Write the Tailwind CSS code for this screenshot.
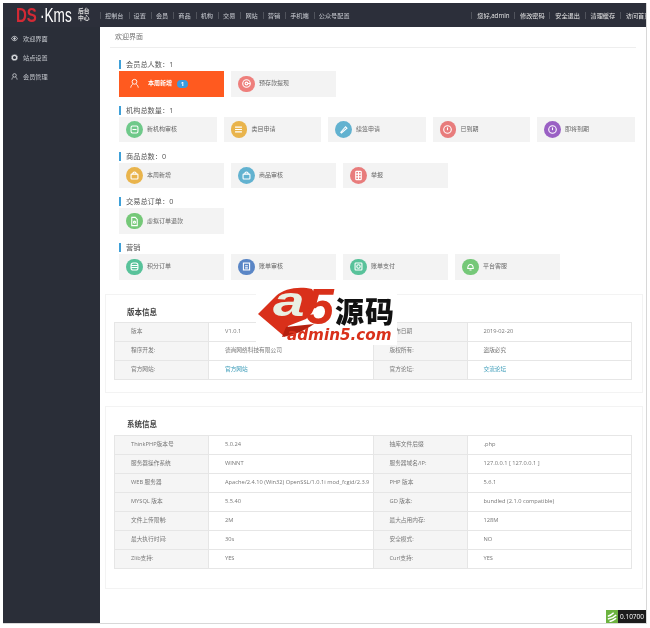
<!DOCTYPE html>
<html lang="zh-CN">
<head>
  <meta charset="UTF-8">
  <title>DS-Kms 后台中心</title>
  <script src="https://cdn.jsdelivr.net/npm/@tailwindcss/browser@4"></script>
</head>
<body class="bg-white font-['Open_Sans','Noto_Sans_CJK_SC',sans-serif] text-[#666] overflow-hidden">
<div class="relative w-[650px] h-[628px] overflow-hidden pt-[3px] pl-[3px] pr-[3px] pb-[4px] [filter:blur(0.35px)]">
  <div class="relative flex flex-col w-[644px] h-[621px] overflow-hidden border-r border-b border-[#d8d8d8]">

    <!-- top bar -->
    <header class="flex items-center h-[24px] shrink-0 bg-[#2c2f3a] text-[#c9ccd2] text-[6.2px] whitespace-nowrap">
      <div class="flex items-center w-[97px] shrink-0 pl-[13px]">
        <span class="inline-block w-[24px] origin-left scale-x-75 text-[#d22a35] text-[20px] leading-none font-bold font-['Liberation_Sans',sans-serif]">DS</span>
        <span class="inline-block w-[34px] origin-left scale-x-[.68] text-white text-[20px] leading-none font-['Liberation_Sans',sans-serif]">·Kms</span>
        <span class="ml-[4px] text-[5.8px] leading-[7.5px] text-[#ddd] font-bold">后台<br>中心</span>
      </div>
      <nav id="nav" class="flex items-center"></nav>
      <div id="userNav" class="flex items-center ml-auto -mr-[9px] text-[#e6e6e6]"></div>
    </header>

    <div class="flex flex-1 min-h-0">
      <!-- left menu -->
      <aside class="w-[97px] shrink-0 bg-[#2a2e38] pt-[2px] text-[#c5c8ce] text-[6.2px]">
        <div class="flex items-center h-[19px] pl-[8px] gap-[5px]">
          <svg class="w-[7px] h-[7px]" viewBox="0 0 16 16" fill="none" stroke="#d5d7db" stroke-width="2"><path d="M1 8c2-3.5 4.500-5 7-5s5 1.500 7 5c-2 3.500-4.500 5-7 5s-5-1.500-7-5z"/><circle cx="8" cy="8" r="2" fill="#d5d7db"/></svg>
          <span>欢迎界面</span>
        </div>
        <div class="flex items-center h-[19px] pl-[8px] gap-[5px]">
          <svg class="w-[7px] h-[7px]" viewBox="0 0 16 16" fill="none" stroke="#d5d7db" stroke-width="3"><circle cx="8" cy="8" r="5"/><circle cx="8" cy="8" r="7.300" stroke-width="1.500" stroke-dasharray="2.500 2"/></svg>
          <span>站点设置</span>
        </div>
        <div class="flex items-center h-[19px] pl-[8px] gap-[5px]">
          <svg class="w-[7px] h-[7px]" viewBox="0 0 16 16" fill="none" stroke="#d5d7db" stroke-width="1.800"><circle cx="8" cy="5.500" r="4"/><path d="M2 15c.5-3.500 2.500-5.500 3.500-6M14 15c-.5-3.500-2.500-5.500-3.500-6"/></svg>
          <span>会员管理</span>
        </div>
      </aside>

      <!-- content -->
      <main class="flex-1 min-w-0 pl-[5px] pr-[3px]">
        <div class="flex items-center h-[21px] ml-[5px] mr-[7px] pl-[5px] border-b border-[#eee] text-[7px] text-[#777]">欢迎界面</div>

        <div id="stats" class="pl-[14px] pt-[12px]"></div>

        <section class="h-[99px] mt-[14px] border border-[#f3f3f3] pl-[8px] pr-[9px]">
          <h3 class="h-[27px] pl-[13px] pt-[11px] text-[7.500px] leading-[13px] font-bold text-[#444]">版本信息</h3>
          <table id="versionTable" class="w-[518px] table-fixed border-collapse text-[5.7px]"></table>
        </section>

        <section class="h-[183px] mt-[13px] border border-[#f3f3f3] pl-[8px] pr-[9px]">
          <h3 class="h-[28px] pl-[13px] pt-[11px] text-[7.500px] leading-[13px] font-bold text-[#444]">系统信息</h3>
          <table id="systemTable" class="w-[518px] table-fixed border-collapse text-[5.7px]"></table>
        </section>
      </main>
    </div>

    <!-- debug badge -->
    <div class="absolute right-0 bottom-0 flex h-[13px] text-[6.500px] leading-[13px]">
      <span class="flex items-center justify-center w-[12px] bg-[#6cb33f]">
        <svg class="w-[10px] h-[10px]" viewBox="0 0 12 12" fill="none" stroke="#fff" stroke-width="1.800"><path d="M1 5c3-.5 5-2 7-4M1 8.500c3-.5 7-2 10-5M3 11.500c3-.5 5-2 8-4"/></svg>
      </span>
      <span class="w-[28px] pl-[2px] bg-[#1c1c1c] text-white overflow-hidden">0.10700</span>
    </div>
  </div>

  <!-- admin5 watermark -->
  <div class="absolute left-[256px] top-[286px] w-[141px] h-[59px] bg-white">
    <svg class="absolute inset-0 w-[141px] h-[59px]" viewBox="0 0 141 59">
      <path d="M2 28 L20 10 C28 2 44 0 56 3 C62 12 60 26 50 33 L32 40 L29 51 Z" fill="#d9301a"/>
      <path d="M26 51 L30 41 L58 38 C48 45 38 49 26 51 Z" fill="#b5200f"/>
    </svg>
    <span class="absolute left-[17px] -top-[4px] origin-left scale-x-[1.35] text-[42px] leading-[40px] italic font-bold text-[#e9f0e2] font-['Liberation_Sans',sans-serif]">a</span>
    <span class="absolute left-[50px] top-[1px] text-[50px] leading-[40px] italic font-bold text-[#d9301a] font-['Liberation_Sans',sans-serif]">5</span>
    <span class="absolute left-[79px] top-[8px] text-[29px] leading-[32px] font-black text-[#111] whitespace-nowrap tracking-[1px] font-['Noto_Sans_CJK_SC',sans-serif]">源码</span>
    <span class="absolute left-[31px] top-[41px] text-[15.200px] leading-[16px] italic font-bold text-[#d9301a] whitespace-nowrap font-['DejaVu_Sans',sans-serif]">admin5.com</span>
  </div>
</div>

<script>
  const navItems = ["控制台", "设置", "会员", "商品", "机构", "交易", "网站", "营销", "手机端", "公众号配置"];
  const userItems = ["您好,admin", "修改密码", "安全退出", "清理缓存", "访问首页"];

  function fillNav(id, items, itemClass) {
    document.getElementById(id).innerHTML = items.map(t =>
      `<span class="${itemClass}">${t}</span>`).join("");
  }
  fillNav("nav", navItems, "border-l border-[#50535c] pl-[4px] pr-[5px] leading-[7px]");
  fillNav("userNav", userItems, "border-l border-[#50535c] pl-[5px] pr-[4.500px] leading-[7px]");

  // small white glyphs inside the round tile icons
  const glyphs = {
    user: '<circle cx="8" cy="5.500" r="3.500"/><path d="M2.500 14c.5-3 2-4.500 3-5M13.500 14c-.5-3-2-4.500-3-5"/>',
    at: '<circle cx="8" cy="8" r="5.500"/><circle cx="8" cy="8" r="2"/><path d="M10 8h3"/>',
    box: '<rect x="3" y="3" width="10" height="10" rx="2"/><path d="M5 8h6"/>',
    list: '<path d="M3 4.500h10M3 8h10M3 11.500h10"/>',
    pen: '<path d="M4 12l7-8 2 2-8 7z"/>',
    alert: '<circle cx="8" cy="8" r="5.500"/><path d="M8 5v4"/>',
    bag: '<rect x="3" y="6" width="10" height="7" rx="1"/><path d="M5.500 6c0-4 5-4 5 0"/>',
    sheet: '<rect x="4" y="2" width="8" height="12" rx="1"/><path d="M4 6h8M4 10h8M8 2v12"/>',
    doc: '<path d="M4 2h5l3 3v9H4z"/><circle cx="8" cy="9" r="1.500"/>',
    db: '<rect x="3" y="3" width="10" height="10" rx="3"/><path d="M3 6.500h10M3 9.500h10"/>',
    bill: '<rect x="3.500" y="3" width="9" height="10"/><path d="M6 7h4M6 10h4"/>',
    pay: '<rect x="3" y="3" width="10" height="10" rx="1"/><circle cx="8" cy="8" r="2.500"/>',
    bell: '<path d="M4 11c0-8 8-8 8 0zM6.500 13h3"/>'
  };

  const G = "bg-[#6fc98a]", Y = "bg-[#e9b44c]", B = "bg-[#62b2d0]", R = "bg-[#e87c7c]", P = "bg-[#9a60c4]";
  const T = "bg-[#58c29a]", N = "bg-[#5a86c6]", L = "bg-[#75c878]", C = "bg-[#ee7f7c]";

  const sections = [
    { title: "会员总人数：1", w: "w-[105px]", tiles: [
      { label: "本周新增", icon: "user", active: true, badge: "1" },
      { label: "预存款提现", icon: "at", color: C } ] },
    { title: "机构总数量：1", w: "w-[97.500px]", tiles: [
      { label: "新机构审核", icon: "box", color: G },
      { label: "类目申请", icon: "list", color: Y },
      { label: "续签申请", icon: "pen", color: B },
      { label: "已到期", icon: "alert", color: R },
      { label: "即将到期", icon: "alert", color: P } ] },
    { title: "商品总数：0", w: "w-[105px]", tiles: [
      { label: "本周新增", icon: "bag", color: Y },
      { label: "商品审核", icon: "bag", color: B },
      { label: "举报", icon: "sheet", color: R } ] },
    { title: "交易总订单：0", w: "w-[105px]", tiles: [
      { label: "虚拟订单退款", icon: "doc", color: L } ] },
    { title: "营销", w: "w-[105px]", tiles: [
      { label: "积分订单", icon: "db", color: T },
      { label: "账单审核", icon: "bill", color: N },
      { label: "账单支付", icon: "pay", color: T },
      { label: "平台客服", icon: "bell", color: L } ] }
  ];

  function tileHtml(tile, w) {
    if (tile.active) {
      return `<div class="flex items-center h-[25.500px] ${w} bg-[#ff5a1f] pl-[10px] text-white text-[6px] font-bold">
        <svg class="w-[11px] h-[11px] mr-[8px]" viewBox="0 0 16 16" fill="none" stroke="#fff" stroke-width="1.300">${glyphs[tile.icon]}</svg>
        <span>${tile.label}</span>
        <span class="ml-[5px] w-[11px] h-[8px] rounded-full bg-[#3a9be0] text-center leading-[8px]">${tile.badge}</span>
      </div>`;
    }
    return `<div class="flex items-center h-[25.500px] ${w} bg-[#f3f3f3] pl-[7px] text-[6px]">
      <span class="flex items-center justify-center w-[16.500px] h-[16.500px] rounded-full mr-[4.500px] ${tile.color}">
        <svg class="w-[11px] h-[11px]" viewBox="0 0 16 16" fill="none" stroke="#fff" stroke-width="1.600">${glyphs[tile.icon]}</svg>
      </span>
      <span>${tile.label}</span>
    </div>`;
  }

  document.getElementById("stats").innerHTML = sections.map(s => `
    <div class="mb-[9.300px]">
      <h4 class="h-[9px] mb-[2px] border-l-2 border-[#3fa0d8] pl-[5px] text-[7.200px] leading-[9px] text-[#555]">${s.title}</h4>
      <div class="flex gap-[7px]">${s.tiles.map(t => tileHtml(t, s.w)).join("")}</div>
    </div>`).join("");

  const versionRows = [
    ["版本", "V1.0.1", "发布日期", "2019-02-20"],
    ["程序开发:", "德尚网络科技有限公司", "版权所有:", "盗版必究"],
    ["官方网站:", { linkText: "官方网站" }, "官方论坛:", { linkText: "交流论坛" }]
  ];
  const systemRows = [
    ["ThinkPHP版本号", "5.0.24", "抽库文件后缀", ".php"],
    ["服务器操作系统", "WINNT", "服务器域名/IP:", "127.0.0.1 [ 127.0.0.1 ]"],
    ["WEB 服务器", "Apache/2.4.10 (Win32) OpenSSL/1.0.1i mod_fcgid/2.3.9", "PHP 版本", "5.6.1"],
    ["MYSQL 版本", "5.5.40", "GD 版本:", "bundled (2.1.0 compatible)"],
    ["文件上传限制:", "2M", "最大占用内存:", "128M"],
    ["最大执行时间:", "30s", "安全模式:", "NO"],
    ["Zlib支持:", "YES", "Curl支持:", "YES"]
  ];

  function valueCell(v) {
    const inner = v.linkText ? `<a class="text-[#3a9bb8]">${v.linkText}</a>` : v;
    return `<td class="border border-[#e6e6e6] h-[19px] p-0 pl-[16px] text-[#777] whitespace-nowrap">${inner}</td>`;
  }
  function labelCell(t, w) {
    return `<td class="${w} border border-[#e6e6e6] bg-[#f5f5f5] h-[19px] p-0 pl-[16px] text-[#777] whitespace-nowrap">${t}</td>`;
  }
  function fillTable(id, rows) {
    document.getElementById(id).innerHTML = rows.map(r => `<tr>
      ${labelCell(r[0], "w-[94px]")}${valueCell(r[1])}${labelCell(r[2], "w-[94px]")}${valueCell(r[3])}
    </tr>`).join("");
  }
  fillTable("versionTable", versionRows);
  fillTable("systemTable", systemRows);
</script>
</body>
</html>
